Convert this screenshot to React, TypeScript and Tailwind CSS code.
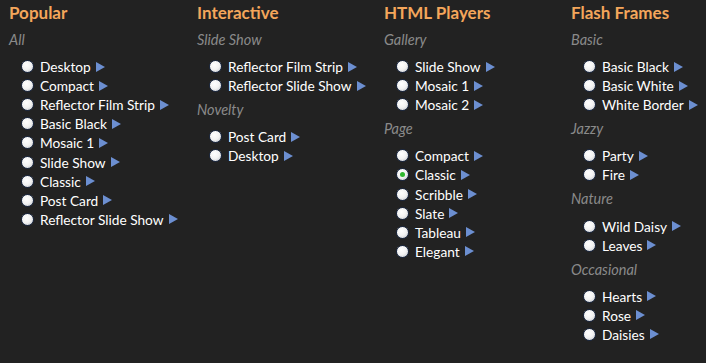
import React from 'react';

type Section = { label: string; items: string[] };
type Column = { title: string; sections: Section[] };

const columns: Column[] = [
  {
    title: 'Popular',
    sections: [
      {
        label: 'All',
        items: ['Desktop', 'Compact', 'Reflector Film Strip', 'Basic Black', 'Mosaic 1', 'Slide Show', 'Classic', 'Post Card', 'Reflector Slide Show'],
      },
    ],
  },
  {
    title: 'Interactive',
    sections: [
      { label: 'Slide Show', items: ['Reflector Film Strip', 'Reflector Slide Show'] },
      { label: 'Novelty', items: ['Post Card', 'Desktop'] },
    ],
  },
  {
    title: 'HTML Players',
    sections: [
      { label: 'Gallery', items: ['Slide Show', 'Mosaic 1', 'Mosaic 2'] },
      { label: 'Page', items: ['Compact', 'Classic', 'Scribble', 'Slate', 'Tableau', 'Elegant'] },
    ],
  },
  {
    title: 'Flash Frames',
    sections: [
      { label: 'Basic', items: ['Basic Black', 'Basic White', 'White Border'] },
      { label: 'Jazzy', items: ['Party', 'Fire'] },
      { label: 'Nature', items: ['Wild Daisy', 'Leaves'] },
      { label: 'Occasional', items: ['Hearts', 'Rose', 'Daisies'] },
    ],
  },
];

function Radio({ checked }: { checked?: boolean }) {
  return (
    <span className="relative flex h-[13px] w-[13px] shrink-0 items-center justify-center rounded-full border border-[#1c2a44] bg-[radial-gradient(circle_at_40%_35%,#ffffff_0%,#f2f2f2_50%,#b9bec6_100%)]">
      {checked && <span className="h-[5px] w-[5px] rounded-full bg-[#2fb82f]" />}
    </span>
  );
}

function Arrow() {
  return (
    <svg width="9" height="10" viewBox="0 0 9 10" className="ml-[5px] shrink-0">
      <path d="M0 0 L9 5 L0 10 Z" fill="#6c8fd1" />
    </svg>
  );
}

export default function App() {
  return (
    <div className="h-[363px] w-[706px] overflow-hidden bg-[#222222] pl-[9px] pt-[3px] font-['Lato','Liberation_Sans',sans-serif]">
      <div className="grid grid-cols-[188px_187px_187px_1fr]">
        {columns.map((col) => (
          <div key={col.title}>
            <h2 className="mb-[2px] h-[20px] text-[17px] font-bold leading-[20px] text-[#f4a65b]">{col.title}</h2>
            {col.sections.map((sec) => (
              <div key={sec.label} className="pt-[5px]">
                <div className="mb-[7px] h-[20px] text-[14.5px] italic leading-[20px] text-[#8a8a8a]">{sec.label}</div>
                <ul className="pl-[12px]">
                  {sec.items.map((item) => (
                    <li key={item} className="flex h-[19.1px] items-center">
                      <Radio checked={col.title === 'HTML Players' && item === 'Classic'} />
                      <span className="ml-[6px] text-[13.7px] leading-[19px] text-white">{item}</span>
                      <Arrow />
                    </li>
                  ))}
                </ul>
              </div>
            ))}
          </div>
        ))}
      </div>
    </div>
  );
}
